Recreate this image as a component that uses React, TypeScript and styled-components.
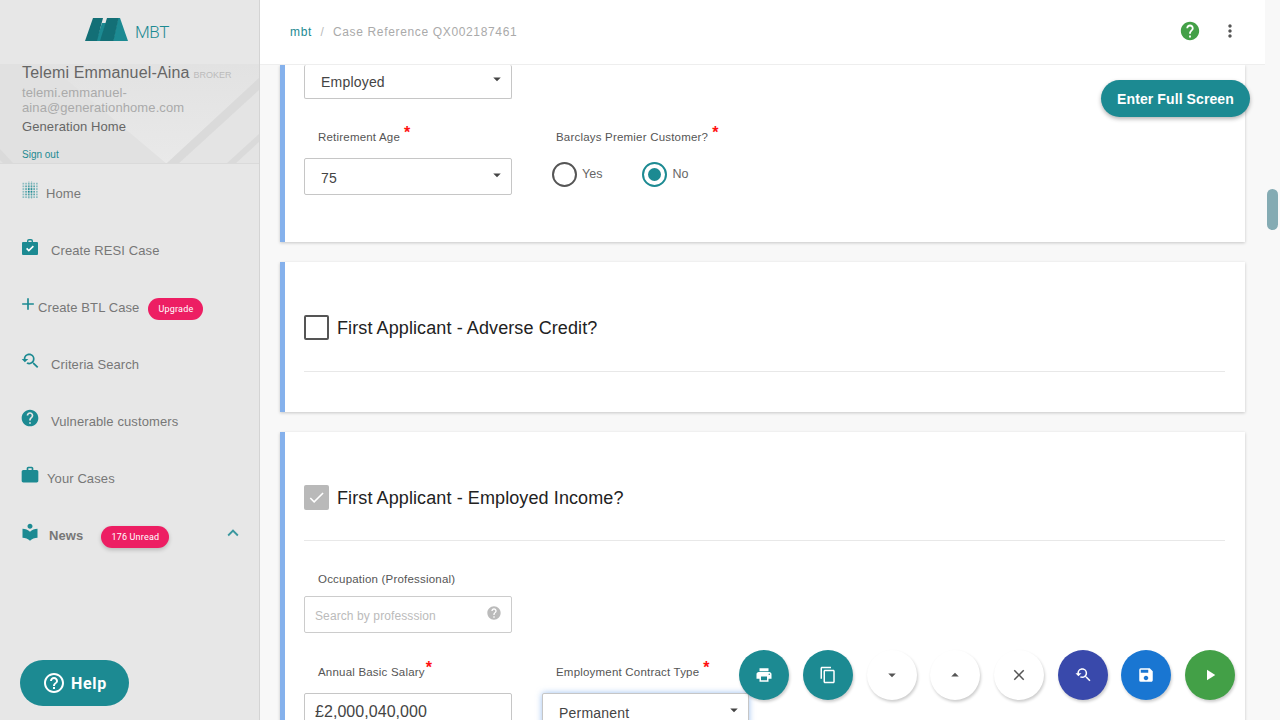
import * as React from 'react'
import styled, { createGlobalStyle } from 'styled-components'
import {
  MdAdd,
  MdArrowDropDown,
  MdArrowDropUp,
  MdCheck,
  MdClose,
  MdContentCopy,
  MdExpandLess,
  MdHelp,
  MdHelpOutline,
  MdLocalLibrary,
  MdMoreVert,
  MdPlayArrow,
  MdPrint,
  MdSave,
  MdWork,
  MdYoutubeSearchedFor,
} from 'react-icons/md'

const teal = '#1c8a92'

const GlobalStyle = createGlobalStyle`
  html, body {
    margin: 0;
    height: 100%;
    overflow: hidden;
    font-family: "Liberation Sans", Arial, sans-serif;
  }
  * { box-sizing: border-box; }
`

const Page = styled.div`
  width: 1280px;
  height: 720px;
  display: flex;
  position: relative;
  overflow: hidden;
  background: #f8f8f8;
`

const Sidebar = styled.aside`
  width: 260px;
  flex: none;
  background: #e7e7e7;
  border-right: 1px solid #d4d4d4;
  display: flex;
  flex-direction: column;
`

const LogoBar = styled.div`
  height: 64px;
  display: flex;
  align-items: center;
  justify-content: center;
  gap: 7px;
  padding-right: 5px;
`

const LogoMark = styled.svg`
  margin-top: -4px;
`

const LogoText = styled.span`
  font-family: Roboto, sans-serif;
  font-size: 17px;
  font-weight: 300;
  letter-spacing: -0.3px;
  color: ${teal};
`

const Profile = styled.div`
  height: 100px;
  position: relative;
  overflow: hidden;
  padding: 0 22px;
  background: #e1e1e1;
  border-bottom: 1px solid #dadada;
`

const ProfilePattern = styled.svg`
  position: absolute;
  inset: 0;
`

const ProfileInner = styled.div`
  position: relative;
`

const NameRow = styled.div`
  display: flex;
  align-items: baseline;
  gap: 4px;
  height: 18px;
  line-height: 18px;
  font-size: 16px;
  letter-spacing: 0.15px;
  color: #666;
`

const Role = styled.span`
  font-size: 9px;
  letter-spacing: 0;
  color: #bbb;
`

const Email = styled.div`
  font-size: 13px;
  line-height: 15px;
  letter-spacing: 0.1px;
  color: #aaa;
  margin-top: 3px;
  width: 180px;
`

const Company = styled.div`
  font-size: 13px;
  line-height: 16px;
  letter-spacing: 0.1px;
  color: #666;
  margin-top: 4px;
`

const SignOut = styled.div`
  font-size: 10px;
  line-height: 12px;
  color: ${teal};
  margin-top: 14px;
`

const Nav = styled.nav`
  display: flex;
  flex-direction: column;
`

const NavItem = styled.div<{ $gap: number }>`
  height: 57px;
  padding: 1px 18px 0 22px;
  display: flex;
  align-items: center;
  gap: ${(p) => p.$gap}px;
  color: #777;
  font-size: 13px;
  letter-spacing: 0.1px;
`

const NavIcon = styled.span<{ $pull: number }>`
  flex: none;
  display: flex;
  color: ${teal};
  margin: -6px 0 0 ${(p) => -p.$pull}px;
`

const NavLabel = styled.span<{ $bold?: boolean }>`
  font-weight: ${(p) => (p.$bold ? 700 : 400)};
`

const Pill = styled.span<{ $raised?: boolean }>`
  height: 22px;
  padding: 0 10px;
  margin: 3px 0 0 9px;
  border-radius: 11px;
  background: #ed1e63;
  color: #fff;
  font-family: Roboto, sans-serif;
  font-size: 9px;
  line-height: 22px;
  letter-spacing: 0.2px;
  box-shadow: ${(p) => (p.$raised ? '0 2px 4px rgba(0,0,0,.2)' : 'none')};
`

const Chevron = styled.span`
  margin: -4px -3px 0 auto;
  display: flex;
  color: ${teal};
  opacity: 0.85;
`

const HelpButton = styled.button`
  position: absolute;
  left: 20px;
  bottom: 14px;
  width: 109px;
  height: 46px;
  border: 0;
  border-radius: 23px;
  background: ${teal};
  color: #fff;
  font-family: Roboto, sans-serif;
  font-size: 16px;
  font-weight: 700;
  letter-spacing: 0.7px;
  display: flex;
  align-items: center;
  justify-content: center;
  gap: 5px;
`

const Main = styled.main`
  flex: 1;
  display: flex;
  flex-direction: column;
  min-width: 0;
`

const TopBar = styled.header`
  height: 65px;
  flex: none;
  width: 1005px;
  background: #fff;
  border-bottom: 1px solid #eee;
  display: flex;
  align-items: center;
  padding: 0 25px 0 30px;
  font-size: 12px;
  letter-spacing: 0.65px;
  color: #aaa;
`

const Crumb = styled.span`
  color: ${teal};
`

const Slash = styled.span`
  margin: 0 8.5px;
  color: #bbb;
`

const TopIcons = styled.div`
  margin: -2px 0 0 auto;
  display: flex;
  align-items: center;
  gap: 19px;
`

const Content = styled.div`
  flex: 1;
  width: 1005px;
  padding: 0 20px;
  overflow: hidden;
  display: flex;
  flex-direction: column;
  gap: 20px;
`

const Card = styled.section<{ $height: number }>`
  flex: none;
  height: ${(p) => p.$height}px;
  background: #fff;
  border-left: 5px solid #85b1ec;
  box-shadow: 0 1px 3px rgba(0, 0, 0, 0.2);
  padding: 0 20px 0 19px;
`

const TitleRow = styled.div<{ $height: number }>`
  display: flex;
  align-items: center;
  gap: 8px;
  height: ${(p) => p.$height}px;
  padding-top: 22px;
  border-bottom: 1px solid #e8e8e8;
  font-size: 18px;
  letter-spacing: 0.1px;
  color: #222;
`

const TitleText = styled.span`
  margin-top: 2px;
`

const CheckBox = styled.span<{ $checked?: boolean }>`
  width: 25px;
  height: 25px;
  border-radius: 2px;
  display: flex;
  align-items: center;
  justify-content: center;
  color: #fff;
  background: ${(p) => (p.$checked ? '#b9b9b9' : '#fff')};
  border: ${(p) => (p.$checked ? '0' : '2px solid #555')};
`

const FieldRow = styled.div<{ $top?: number }>`
  display: grid;
  grid-template-columns: 208px 207px;
  column-gap: 30px;
  margin-top: ${(p) => p.$top || 0}px;
`

const Field = styled.div`
  display: flex;
  flex-direction: column;
`

const Label = styled.label<{ $after?: number }>`
  height: 18px;
  line-height: 18px;
  padding-left: 14px;
  font-size: 11.5px;
  letter-spacing: 0.2px;
  color: #555;
  margin-bottom: ${(p) => (p.$after === undefined ? 13 : p.$after)}px;
`

const Star = styled.span<{ $tight?: boolean }>`
  color: #f11;
  font-size: 16px;
  font-weight: 700;
  margin-left: ${(p) => (p.$tight ? 1 : 4)}px;
  position: relative;
  top: -3px;
`

const Control = styled.div<{ $focus?: boolean; $h?: number }>`
  height: ${(p) => p.$h || 37}px;
  border: 1px solid #c6c6c6;
  border-radius: 2px;
  background: #fff;
  display: flex;
  align-items: center;
  padding: 2px 5px 0 16px;
  font-size: 14px;
  letter-spacing: 0.2px;
  color: #444;
  box-shadow: ${(p) => (p.$focus ? '0 0 6px rgba(90,150,230,.6)' : 'none')};
  svg {
    margin-left: auto;
    margin-top: -5px;
  }
`

const ClippedSelect = styled(Control)`
  padding-top: 0;
  border-top: 0;
`

const SearchInput = styled(Control)`
  padding: 2px 9px 0 10px;
  font-size: 12px;
  letter-spacing: 0.1px;
  color: #bbb;
  border-color: #ccc;
`

const MoneyInput = styled(Control)`
  padding: 9px 0 0 10px;
  font-size: 16px;
  letter-spacing: 0.05px;
  align-items: flex-start;
`

const RadioGroup = styled.div`
  display: flex;
  gap: 40px;
  padding: 0 0 4px 10px;
  height: 37px;
  align-items: center;
`

const RadioOption = styled.span`
  display: flex;
  align-items: center;
  gap: 5px;
  font-size: 12.5px;
  color: #666;
`

const RadioText = styled.span`
  margin-top: -1px;
`

const RadioMark = styled.span<{ $on?: boolean }>`
  width: 25px;
  height: 25px;
  border-radius: 50%;
  border: 2px solid ${(p) => (p.$on ? teal : '#555')};
  display: flex;
  align-items: center;
  justify-content: center;
  &::after {
    content: '';
    width: 13px;
    height: 13px;
    border-radius: 50%;
    background: ${(p) => (p.$on ? teal : 'transparent')};
  }
`

const FullScreen = styled.button`
  position: absolute;
  left: 1101px;
  top: 80px;
  width: 149px;
  height: 37px;
  border: 0;
  border-radius: 19px;
  background: ${teal};
  color: #fff;
  font-family: inherit;
  font-size: 14px;
  font-weight: 700;
  letter-spacing: 0.1px;
  box-shadow: 0 2px 4px rgba(0, 0, 0, 0.3);
`

const ScrollThumb = styled.div`
  position: absolute;
  left: 1267px;
  top: 189px;
  width: 11px;
  height: 41px;
  border-radius: 6px;
  background: #84abb3;
`

const Fabs = styled.div`
  position: absolute;
  right: 45px;
  bottom: 20px;
  display: flex;
  gap: 13.7px;
`

const Fab = styled.button<{ $bg: string; $fg: string }>`
  width: 50px;
  height: 50px;
  padding: 0;
  border: 0;
  border-radius: 50%;
  background: ${(p) => p.$bg};
  color: ${(p) => p.$fg};
  display: flex;
  align-items: center;
  justify-content: center;
  box-shadow: 1px 2px 3px rgba(0, 0, 0, 0.2);
`

const Logo = () => (
  <LogoMark width="43" height="24" viewBox="0 0 43 24">
    <path d="M11 23 L17 5 H21 L16 23 Z" fill="#1c8a92" />
    <path d="M28 23 L33 0 H35 L43 23 Z" fill="#1c8a92" />
    <path d="M0 23 L8 0 H18 L12 23 Z" fill="#136f76" />
    <path d="M15 23 L22 0 H33.5 L28.5 23 Z" fill="#136f76" />
  </LogoMark>
)

const DotGrid = () => {
  const dots = []
  for (let x = 0; x < 6; x++) {
    for (let y = 0; y < 6; y++) {
      const edge = Math.max(Math.abs(x - 2.5), Math.abs(y - 2.5))
      dots.push(
        <rect
          key={`${x}-${y}`}
          x={x * 2.7 + 0.5}
          y={y * 2.7 + 1.8}
          width="1.7"
          height="1.7"
          fill={teal}
          opacity={edge > 2 ? 0.45 : edge > 1 ? 0.7 : 1}
        />
      )
    }
  }
  return (
    <svg width="16" height="18" viewBox="0 0 16 18">
      <path d="M6.9 0V18M9.6 0V18" stroke={teal} strokeWidth="0.8" opacity="0.3" />
      {dots}
    </svg>
  )
}

const CaseCheck = () => (
  <svg width="18" height="18" viewBox="0 0 18 18">
    <path
      d="M6 4V3a2 2 0 0 1 2-2h2a2 2 0 0 1 2 2v1h4a1 1 0 0 1 1 1v11a1 1 0 0 1-1 1H2a1 1 0 0 1-1-1V5a1 1 0 0 1 1-1zm1.4 0h3.2V3a.6.6 0 0 0-.6-.6H8a.6.6 0 0 0-.6.6z"
      fill="currentColor"
    />
    <path d="M5.6 10.4l2.2 2.2 4.6-4.4" stroke="#fff" strokeWidth="1.6" fill="none" />
  </svg>
)

const navItems = [
  { label: 'Home', icon: <DotGrid />, gap: 8, pull: 0 },
  { label: 'Create RESI Case', icon: <CaseCheck />, gap: 12, pull: 1 },
  { label: 'Create BTL Case', icon: <MdAdd size={20} />, gap: 0, pull: 4 },
  { label: 'Criteria Search', icon: <MdYoutubeSearchedFor size={20} />, gap: 11, pull: 2 },
  { label: 'Vulnerable customers', icon: <MdHelp size={20} />, gap: 11, pull: 2 },
  { label: 'Your Cases', icon: <MdWork size={20} />, gap: 7, pull: 2 },
]

const App: React.FunctionComponent = () => (
  <Page>
    <GlobalStyle />
    <Sidebar>
      <LogoBar>
        <Logo />
        <LogoText>MBT</LogoText>
      </LogoBar>
      <Profile>
        <ProfilePattern width="259" height="100" viewBox="0 0 259 100">
          <defs>
            <linearGradient id="panelLight" x1="0" y1="0" x2="0" y2="1">
              <stop offset="0" stopColor="#e2e2e2" />
              <stop offset="1" stopColor="#e9e9e9" />
            </linearGradient>
          </defs>
          <path d="M48 0 H259 V14 L166 100 H167 Z" fill="url(#panelLight)" />
          <path d="M178 100 L259 26 V100 Z" fill="#e4e4e4" />
          <path d="M166 100 L259 14 V26 L178 100 Z" fill="#dadada" />
          <path d="M226 100 L259 70 V78 L235 100 Z" fill="#dadada" />
          <path d="M0 85 L14 100 H4 L0 96 Z" fill="#dadada" />
        </ProfilePattern>
        <ProfileInner>
          <NameRow>
            Telemi Emmanuel-Aina <Role>BROKER</Role>
          </NameRow>
          <Email>telemi.emmanuel-aina@generationhome.com</Email>
          <Company>Generation Home</Company>
          <SignOut>Sign out</SignOut>
        </ProfileInner>
      </Profile>
      <Nav>
        {navItems.map((item) => (
          <NavItem key={item.label} $gap={item.gap}>
            <NavIcon $pull={item.pull}>{item.icon}</NavIcon>
            <NavLabel>{item.label}</NavLabel>
            {item.label === 'Create BTL Case' && <Pill>Upgrade</Pill>}
          </NavItem>
        ))}
        <NavItem $gap={9}>
          <NavIcon $pull={2}>
            <MdLocalLibrary size={20} />
          </NavIcon>
          <NavLabel $bold>News</NavLabel>
          <Pill $raised>176 Unread</Pill>
          <Chevron>
            <MdExpandLess size={22} />
          </Chevron>
        </NavItem>
      </Nav>
    </Sidebar>
    <Main>
      <TopBar>
        <Crumb>mbt</Crumb>
        <Slash>/</Slash>
        Case Reference QX002187461
        <TopIcons>
          <MdHelp size={22} color="#43a047" />
          <MdMoreVert size={20} color="#555" />
        </TopIcons>
      </TopBar>
      <Content>
        <Card $height={177}>
          <FieldRow>
            <ClippedSelect $h={34}>
              Employed
              <MdArrowDropDown size={18} color="#444" />
            </ClippedSelect>
          </FieldRow>
          <FieldRow $top={28}>
            <Field>
              <Label>
                Retirement Age<Star>*</Star>
              </Label>
              <Control>
                75
                <MdArrowDropDown size={18} color="#444" />
              </Control>
            </Field>
            <Field>
              <Label>
                Barclays Premier Customer?<Star>*</Star>
              </Label>
              <RadioGroup>
                <RadioOption>
                  <RadioMark />
                  <RadioText>Yes</RadioText>
                </RadioOption>
                <RadioOption>
                  <RadioMark $on />
                  <RadioText>No</RadioText>
                </RadioOption>
              </RadioGroup>
            </Field>
          </FieldRow>
        </Card>
        <Card $height={150}>
          <TitleRow $height={110}>
            <CheckBox />
            <TitleText>First Applicant - Adverse Credit?</TitleText>
          </TitleRow>
        </Card>
        <Card $height={400}>
          <TitleRow $height={109}>
            <CheckBox $checked>
              <MdCheck size={19} />
            </CheckBox>
            <TitleText>First Applicant - Employed Income?</TitleText>
          </TitleRow>
          <FieldRow $top={29}>
            <Field>
              <Label $after={8}>Occupation (Professional)</Label>
              <SearchInput $h={37}>
                Search by professsion
                <MdHelp size={16} color="#bbb" />
              </SearchInput>
            </Field>
          </FieldRow>
          <FieldRow $top={29}>
            <Field>
              <Label>
                Annual Basic Salary<Star $tight>*</Star>
              </Label>
              <MoneyInput>£2,000,040,000</MoneyInput>
            </Field>
            <Field>
              <Label>
                Employment Contract Type<Star>*</Star>
              </Label>
              <Control $focus>
                Permanent
                <MdArrowDropDown size={18} color="#444" />
              </Control>
            </Field>
          </FieldRow>
        </Card>
      </Content>
    </Main>
    <HelpButton>
      <MdHelpOutline size={24} />
      Help
    </HelpButton>
    <FullScreen>Enter Full Screen</FullScreen>
    <ScrollThumb />
    <Fabs>
      <Fab $bg={teal} $fg="#fff">
        <MdPrint size={18} />
      </Fab>
      <Fab $bg={teal} $fg="#fff">
        <MdContentCopy size={18} />
      </Fab>
      <Fab $bg="#fff" $fg="#555">
        <MdArrowDropDown size={18} />
      </Fab>
      <Fab $bg="#fff" $fg="#555">
        <MdArrowDropUp size={18} />
      </Fab>
      <Fab $bg="#fff" $fg="#555">
        <MdClose size={18} />
      </Fab>
      <Fab $bg="#3949ab" $fg="#fff">
        <MdYoutubeSearchedFor size={18} />
      </Fab>
      <Fab $bg="#1976d2" $fg="#fff">
        <MdSave size={18} />
      </Fab>
      <Fab $bg="#43a047" $fg="#fff">
        <MdPlayArrow size={18} />
      </Fab>
    </Fabs>
  </Page>
)

export default App
